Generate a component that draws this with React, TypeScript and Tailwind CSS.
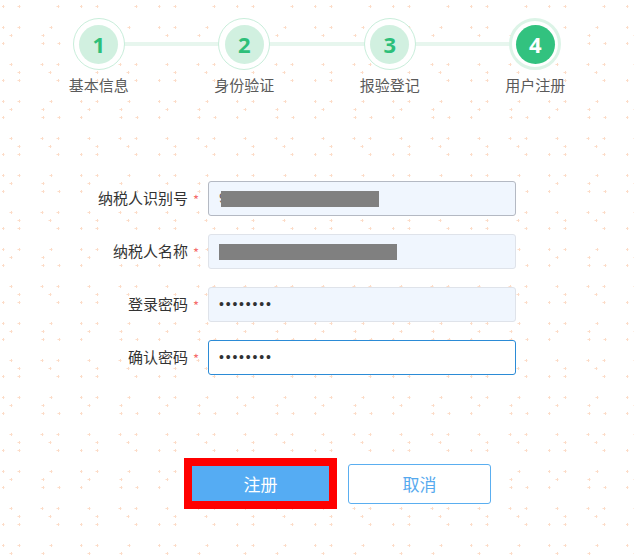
import React from "react";

const steps = [
  { num: "1", label: "基本信息", active: false },
  { num: "2", label: "身份验证", active: false },
  { num: "3", label: "报验登记", active: false },
  { num: "4", label: "用户注册", active: true },
];

const font = "font-['Microsoft_YaHei','Noto_Sans_CJK_SC',sans-serif]";

const Dots = () => (
  <svg className="pointer-events-none absolute inset-0 h-full w-full" aria-hidden="true">
    <defs>
      <pattern id="crosses" x="2" y="26" width="78" height="74" patternUnits="userSpaceOnUse">
        {[
          [1, 1], [1, 17], [17, 1], [9, 9],
          [41, 9], [49, 1], [57, 17], [41, 17],
          [9, 38], [1, 54], [17, 54], [17, 46],
          [40, 38], [48, 46], [56, 38], [56, 54],
        ].map(([x, y], i) => (
          <path key={i} d={`M${x - 1.5} ${y + 0.5}h3M${x + 0.5} ${y - 1}v3`} stroke="#fcdcc8" strokeWidth="1" />
        ))}
      </pattern>
    </defs>
    <rect width="100%" height="100%" fill="url(#crosses)" />
  </svg>
);

const Step = ({ num, label, active }: { num: string; label: string; active: boolean }) => (
  <div className="flex flex-col items-center">
    <div
      className={`flex h-[52px] w-[52px] items-center justify-center rounded-full bg-white ${
        active ? "border-[3px] border-[#dcf4e7]" : "border border-[#c9eedb]"
      }`}
    >
      <div
        className={`flex h-[39px] w-[39px] items-center justify-center rounded-full text-[22px] font-bold font-['Open_Sans',sans-serif] ${
          active ? "bg-[#32c27f] text-white" : "bg-[#d1f0e0] text-[#2dbf79]"
        }`}
      >
        {num}
      </div>
    </div>
    <div className={`mt-[5px] text-[15px] leading-[20px] text-[#5a5a5a] ${font}`}>{label}</div>
  </div>
);

const Field = ({ label, children, focus, dark }: { label: string; children: React.ReactNode; focus?: boolean; dark?: boolean }) => (
  <div className="flex h-[35px] items-center">
    <div className={`flex w-[208px] items-center justify-end pr-[9px] text-[15px] text-[#333] ${font}`}>
      <span>{label}</span>
      <span className="ml-[5px] mt-[3px] text-[13px] text-[#f56c6c]">*</span>
    </div>
    <div
      className={`flex h-[35px] w-[308px] items-center rounded-[3px] border pl-[10px] ${
        focus ? "border-[#2b8bd6] bg-white" : dark ? "border-[#b4b9c3] bg-[#f0f6fe]" : "border-[#dfe3ea] bg-[#f0f6fe]"
      }`}
    >
      {children}
    </div>
  </div>
);

const Pass = () => (
  <span className="font-['Liberation_Sans',sans-serif] text-[14px] tracking-[1.8px] text-[#303133]">••••••••</span>
);

export default function App() {
  return (
    <div className="relative min-h-[560px] w-full overflow-hidden bg-white">
      <Dots />
      <div className="relative">
        <div className="relative mx-auto grid w-[582px] grid-cols-4 pt-[18px]">
          <div className="absolute left-[73px] right-[73px] top-[42px] h-[4px] bg-[#e7f6ee]" />
          {steps.map((s) => (
            <div key={s.num} className="relative">
              <Step {...s} />
            </div>
          ))}
        </div>

        <div className="mt-[86px] flex flex-col gap-[18px]">
          <Field label="纳税人识别号" dark>
            <div className="relative flex items-center">
              <span className="font-['Liberation_Sans',sans-serif] text-[14px] text-[#606266]">9</span>
              <div className="-ml-[6px] h-[16px] w-[158px] bg-[#808080]" />
            </div>
          </Field>
          <Field label="纳税人名称">
            <div className="h-[16px] w-[178px] bg-[#808080]" />
          </Field>
          <Field label="登录密码">
            <Pass />
          </Field>
          <Field label="确认密码" focus>
            <Pass />
          </Field>
        </div>

        <div className={`mt-[83px] flex items-center pl-[184px] ${font}`}>
          <div className="h-[51px] w-[153px] border-[8px] border-[#ff0000]">
            <button className="flex h-full w-full items-center justify-center bg-[#55acf3] text-[17px] text-white">
              注册
            </button>
          </div>
          <button className="ml-[11px] flex h-[40px] w-[143px] items-center justify-center rounded-[3px] border border-[#5aaef0] bg-white text-[17px] text-[#55a9ee]">
            取消
          </button>
        </div>
      </div>
    </div>
  );
}
